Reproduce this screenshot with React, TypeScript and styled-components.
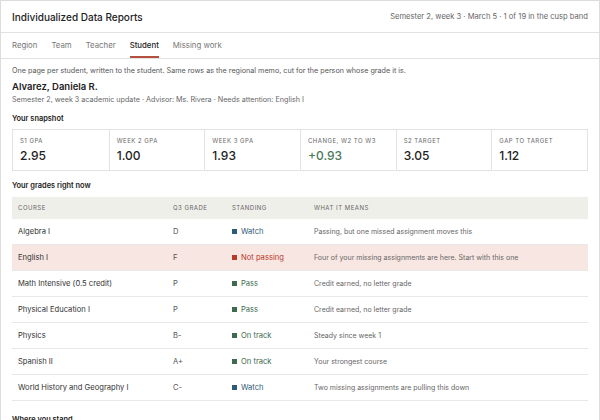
import React from "react";
import styled, { createGlobalStyle } from "styled-components";

const Global = createGlobalStyle`
  html, body { margin: 0; padding: 0; background: #fff; }
  body { font-family: Inter, "Liberation Sans", sans-serif; color: #222; }
`;

const Frame = styled.div`
  width: 600px; height: 420px; box-sizing: border-box; overflow: hidden;
  border: 1px solid #dcdcdc; border-bottom: none; background: #fff;
`;
const Header = styled.div`
  height: 31px; display: flex; align-items: center; justify-content: space-between;
  padding: 0 11px; border-bottom: 1px solid #e2e2e2;
`;
const Title = styled.div` font-size: 10px; font-weight: 500; color: #222; `;
const Meta = styled.div` font-size: 7.6px; color: #666; `;
const Tabs = styled.div`
  height: 25px; display: flex; gap: 14px; padding: 0 11px; border-bottom: 1px solid #e2e2e2;
`;
const Tab = styled.div<{ $active?: boolean }>`
  font-size: 7.8px; display: flex; align-items: center; padding-top: 1px;
  color: ${p => (p.$active ? "#222" : "#777")};
  font-weight: ${p => (p.$active ? 500 : 400)};
  border-bottom: 2px solid ${p => (p.$active ? "#b5503f" : "transparent")};
`;
const Body = styled.div` padding: 0 11px; `;
const Intro = styled.p` font-size: 7.2px; color: #555; margin: 6px 0 0; line-height: 11px; `;
const Name = styled.div` font-size: 9.5px; font-weight: 600; margin-top: 5px; `;
const Sub = styled.div` font-size: 7.2px; color: #666; margin-top: 3px; `;
const Section = styled.div<{ $gap?: number }>`
  font-size: 7.4px; font-weight: 600; margin-top: ${p => p.$gap ?? 10}px; color: #222;
`;
const Snap = styled.div`
  display: grid; grid-template-columns: repeat(6, 1fr); margin-top: 6px;
  border: 1px solid #e2e2e2; height: 42px; box-sizing: border-box;
`;
const Cell = styled.div`
  padding: 7px 7px 0; border-left: 1px solid #e2e2e2;
  &:first-child { border-left: none; }
`;
const Label = styled.div` font-size: 6px; letter-spacing: 0.5px; color: #666; text-transform: uppercase; `;
const Value = styled.div<{ $green?: boolean }>`
  font-size: 12px; margin-top: 4px; font-weight: 500; color: ${p => (p.$green ? "#4a7a5a" : "#222")};
`;
const Table = styled.div` margin-top: 7px; `;
const Row = styled.div<{ $head?: boolean; $hl?: boolean }>`
  display: grid; grid-template-columns: 155px 59px 82px 1fr; align-items: center;
  height: ${p => (p.$head ? "22px" : "26px")}; padding-left: 6px; box-sizing: border-box;
  background: ${p => (p.$head ? "#efefea" : p.$hl ? "#f8e6e2" : "transparent")};
  border-bottom: 1px solid ${p => (p.$head ? "#efefea" : "#e8e8e8")};
  font-size: ${p => (p.$head ? "6px" : "7.6px")};
  letter-spacing: ${p => (p.$head ? "0.5px" : "0")};
  color: ${p => (p.$head ? "#666" : "#333")};
`;
const Grade = styled.div` color: #555; `;
const Means = styled.div` color: #666; font-size: 7px; `;
const Standing = styled.div<{ $c: string }>`
  display: flex; align-items: center; gap: 4px; color: ${p => p.$c}; font-size: 7.6px;
  &::before { content: ""; width: 5px; height: 5px; background: ${p => p.$c}; }
`;

const colors: Record<string, string> = {
  Watch: "#2f5b78", "Not passing": "#b73a2b", Pass: "#3e6b50", "On track": "#3e6b50",
};
const rows = [
  ["Algebra I", "D", "Watch", "Passing, but one missed assignment moves this"],
  ["English I", "F", "Not passing", "Four of your missing assignments are here. Start with this one"],
  ["Math Intensive (0.5 credit)", "P", "Pass", "Credit earned, no letter grade"],
  ["Physical Education I", "P", "Pass", "Credit earned, no letter grade"],
  ["Physics", "B-", "On track", "Steady since week 1"],
  ["Spanish II", "A+", "On track", "Your strongest course"],
  ["World History and Geography I", "C-", "Watch", "Two missing assignments are pulling this down"],
];
const snaps: [string, string, boolean?][] = [
  ["S1 GPA", "2.95"], ["Week 2 GPA", "1.00"], ["Week 3 GPA", "1.93"],
  ["Change, W2 to W3", "+0.93", true], ["S2 Target", "3.05"], ["Gap to target", "1.12"],
];

export default function App() {
  return (
    <Frame>
      <Global />
      <Header>
        <Title>Individualized Data Reports</Title>
        <Meta>Semester 2, week 3 · March 5 · 1 of 19 in the cusp band</Meta>
      </Header>
      <Tabs>
        {["Region", "Team", "Teacher", "Student", "Missing work"].map(t => (
          <Tab key={t} $active={t === "Student"}>{t}</Tab>
        ))}
      </Tabs>
      <Body>
        <Intro>One page per student, written to the student. Same rows as the regional memo, cut for the person whose grade it is.</Intro>
        <Name>Alvarez, Daniela R.</Name>
        <Sub>Semester 2, week 3 academic update · Advisor: Ms. Rivera · Needs attention: English I</Sub>
        <Section>Your snapshot</Section>
        <Snap>
          {snaps.map(([l, v, g]) => (
            <Cell key={l}><Label>{l}</Label><Value $green={g}>{v}</Value></Cell>
          ))}
        </Snap>
        <Section>Your grades right now</Section>
        <Table>
          <Row $head><div>COURSE</div><div>Q3 GRADE</div><div>STANDING</div><div>WHAT IT MEANS</div></Row>
          {rows.map(r => (
            <Row key={r[0]} $hl={r[2] === "Not passing"}>
              <div>{r[0]}</div><Grade>{r[1]}</Grade>
              <Standing $c={colors[r[2]]}>{r[2]}</Standing><Means>{r[3]}</Means>
            </Row>
          ))}
        </Table>
        <Section $gap={14}>Where you stand</Section>
      </Body>
    </Frame>
  );
}
